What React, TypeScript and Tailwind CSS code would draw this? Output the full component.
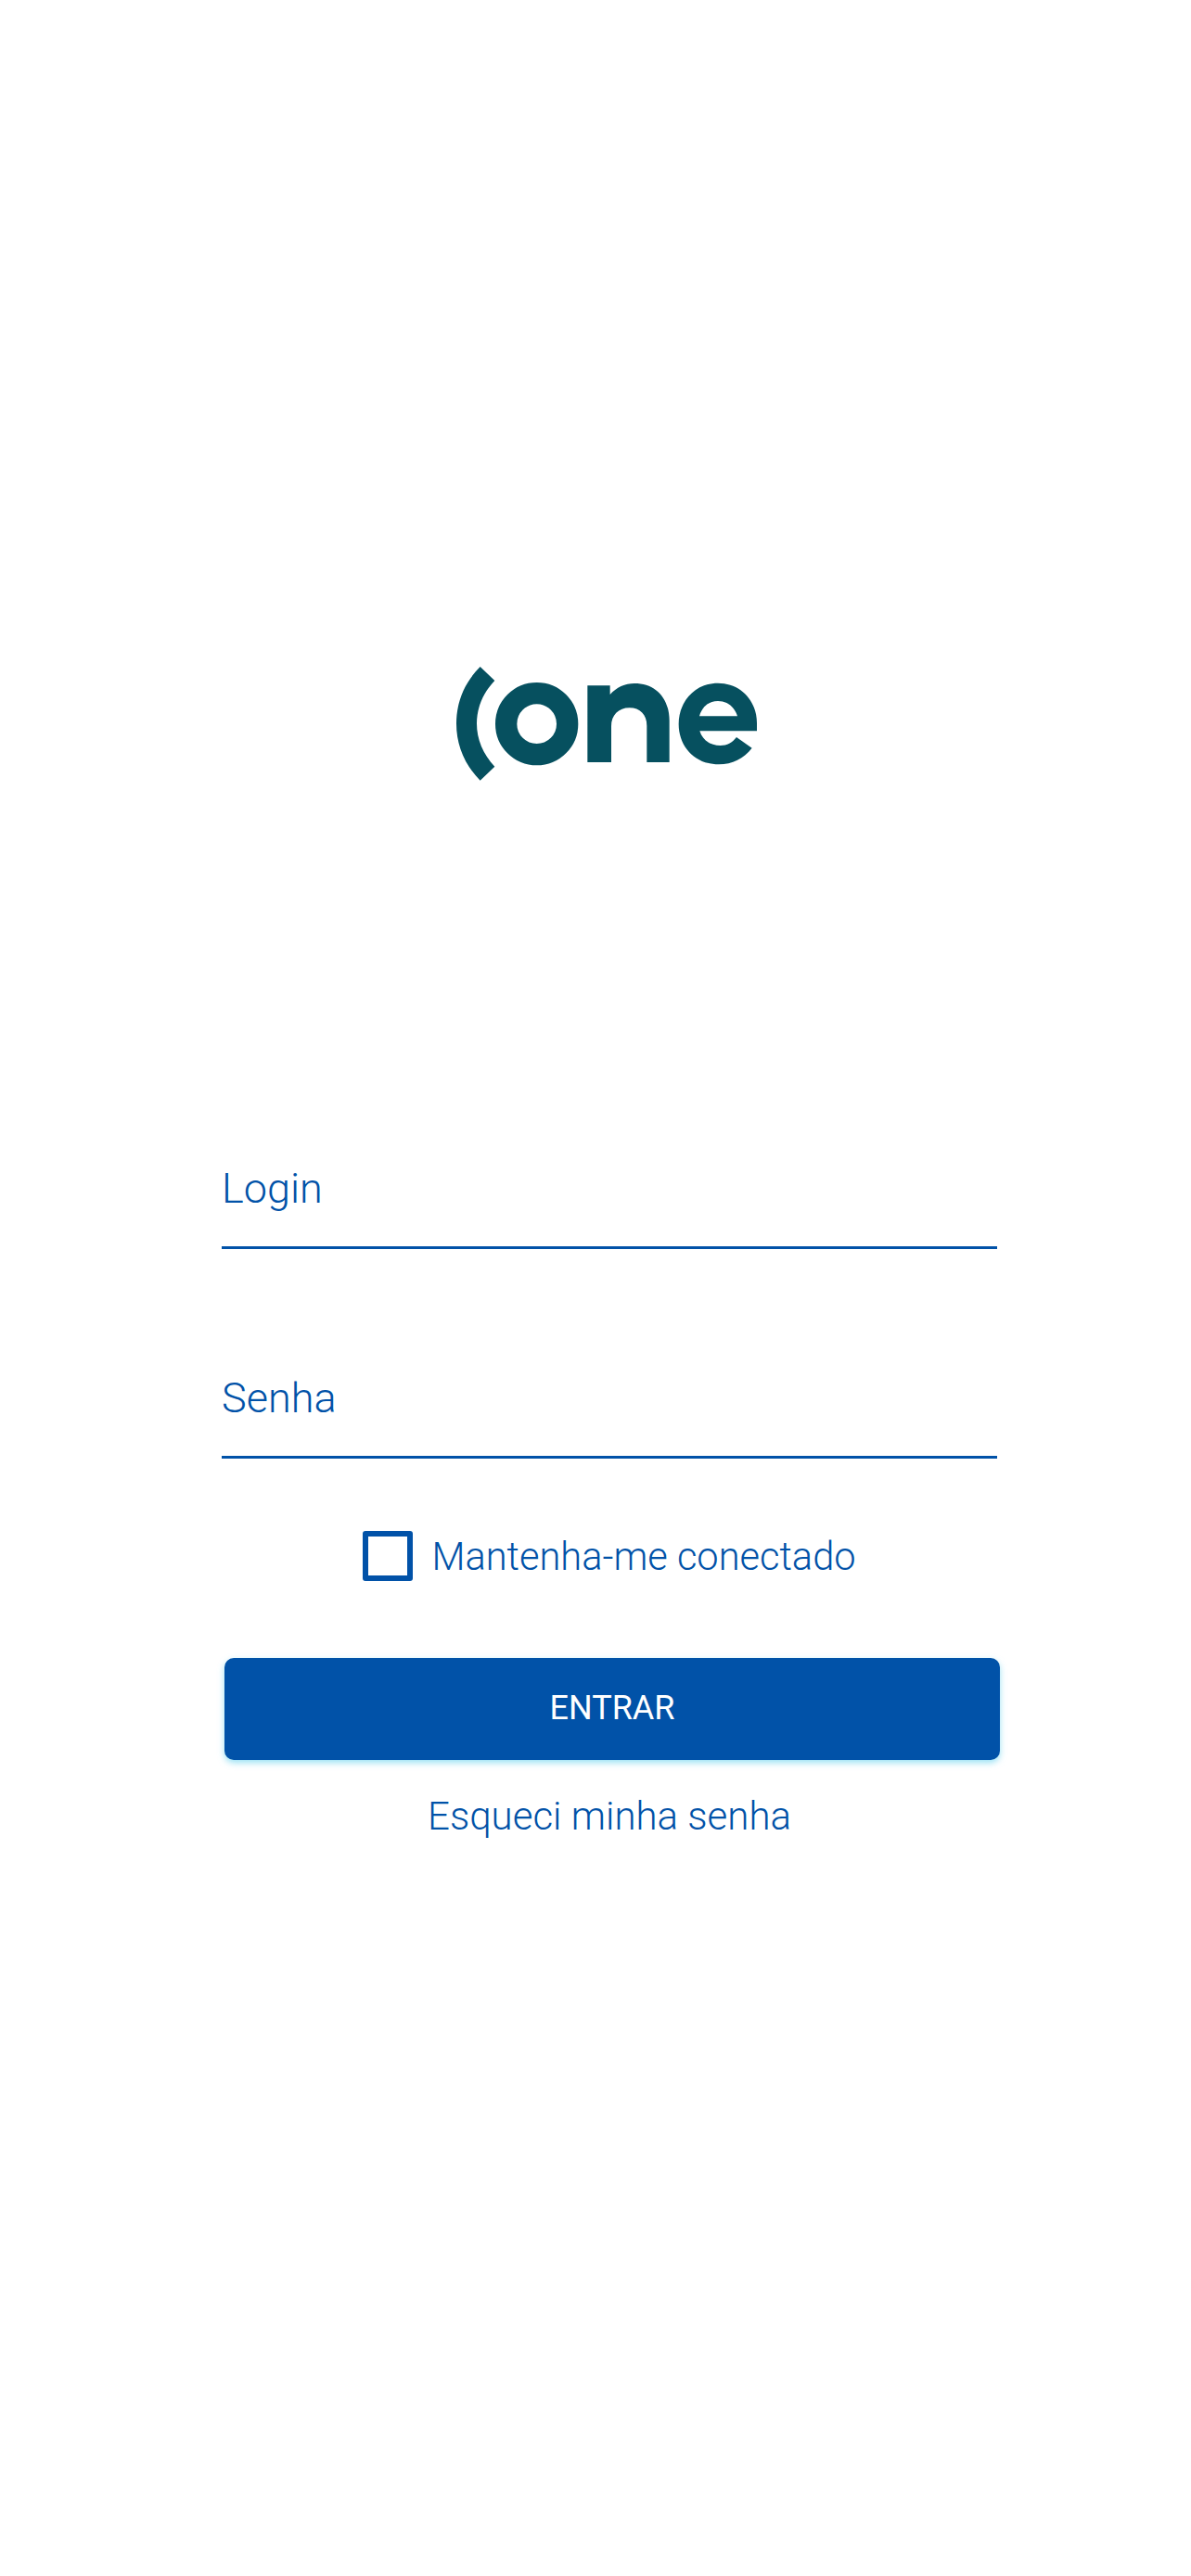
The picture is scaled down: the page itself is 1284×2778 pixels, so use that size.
import React from 'react';

// Brand mark: bracket plus the word "one"
function Logo() {
  return (
    <svg viewBox="0 0 1080 450" className="w-[360px] h-[150px] block" fill="#06505f">
      <path d="M143 57 L190 102 C152 142 132 190 132 241 C132 292 152 340 190 380 L143 425 C92 374 66 310 66 241 C66 172 92 108 143 57 Z" />
      <circle cx="326" cy="242" r="99" fill="none" stroke="#06505f" strokeWidth="70" />
      <path d="M490 118 L563 118 L563 147 C583 124 612 111 642 111 C710 111 755 158 755 232 L755 366 L682 366 L682 248 C682 212 660 190 626 190 C590 190 567 214 567 250 L567 366 L490 366 Z" />
      <path
        fillRule="evenodd"
        d="M912 110 C985 110 1038 166 1038 240 L1038 265 L853 265 C862 295 888 312 920 312 C942 312 958 303 972 285 L1022 320 C996 354 958 373 915 373 C838 373 785 316 785 242 C785 168 840 110 912 110 Z M852 217 L975 217 C966 187 942 168 912 168 C882 168 860 187 852 217 Z"
      />
    </svg>
  );
}

function Field({ label }: { label: string }) {
  return (
    <div className="h-[226px] flex flex-col justify-end">
      <label className="text-[45px] leading-[52px] font-light text-[#0152a8] pb-[36px]">{label}</label>
      <div className="h-[3px] bg-[#0152a8]" />
    </div>
  );
}

export default function App() {
  return (
    <div className="min-h-[2778px] w-full bg-white font-['Roboto',sans-serif]">
      <div className="pt-[700px] ml-[470px]">
        <Logo />
      </div>
      <form className="w-[836px] ml-[239px] pt-[271px]">
        <Field label="Login" />
        <Field label="Senha" />
        <div className="flex items-center justify-center gap-[20px] mt-[78px] h-[54px]">
          <span className="w-[54px] h-[54px] border-[6px] border-[#0152a8] rounded-[3px] shrink-0" />
          <span className="pt-[2px] text-[41.6px] leading-[52px] font-light text-[#0152a8]">Mantenha-me conectado</span>
        </div>
        <button
          type="button"
          className="mt-[83px] ml-[3px] pb-[2px] w-[836px] h-[110px] rounded-[10px] bg-[#0152a8] text-white text-[36px] shadow-[0_3px_7px_rgba(70,200,235,0.55)]"
        >
          ENTRAR
        </button>
        <p className="mt-[35px] text-center text-[42px] leading-[52px] font-light text-[#0152a8]">Esqueci minha senha</p>
      </form>
    </div>
  );
}
